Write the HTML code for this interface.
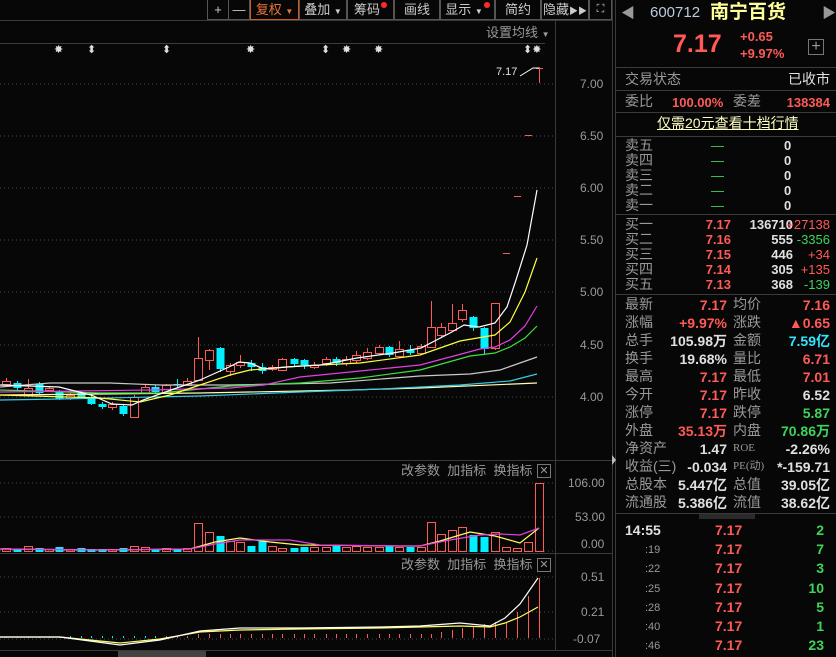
<!DOCTYPE html>
<html><head><meta charset="utf-8"><style>
*{margin:0;padding:0;box-sizing:border-box}
body{width:836px;height:657px;background:#070707;overflow:hidden;position:relative;font-family:"Liberation Sans","Noto Sans CJK SC",sans-serif;color:#ccc}
.a{position:absolute;white-space:nowrap;font-size:13px;line-height:15px}
.r{color:#ff5a55}.g{color:#3fd35a}.w{color:#e0e0e0}.c{color:#33e6ff}.gr{color:#999}
.tb{position:absolute;top:0;height:20px;border:1px solid #555;border-top:none;font-size:13px;line-height:19px;text-align:center;color:#ccc}
.dot{display:inline-block;width:6px;height:6px;border-radius:3px;background:#ff2a2a;vertical-align:6px;margin-left:1px}
.hl{position:absolute;left:615px;width:221px;height:1px;background:#3a3a3a}
.L{position:absolute;left:625px}
.v1{position:absolute;right:109px;text-align:right}
.L2{position:absolute;left:733px}
.v2{position:absolute;right:6px;text-align:right}
</style></head><body>
<svg width="836" height="657" style="position:absolute;left:0;top:0" id="s">
<g stroke="#4a4a4a" stroke-dasharray="1,3">
<line x1="0" y1="84" x2="555" y2="84"/><line x1="0" y1="136" x2="555" y2="136"/><line x1="0" y1="188" x2="555" y2="188"/><line x1="0" y1="240" x2="555" y2="240"/><line x1="0" y1="292" x2="555" y2="292"/><line x1="0" y1="345" x2="555" y2="345"/><line x1="0" y1="397" x2="555" y2="397"/>
<line x1="0" y1="483" x2="555" y2="483"/><line x1="0" y1="517" x2="555" y2="517"/><line x1="0" y1="551" x2="555" y2="551"/>
<line x1="0" y1="577" x2="555" y2="577"/><line x1="0" y1="612" x2="555" y2="612"/><line x1="0" y1="639" x2="555" y2="639"/>
</g>
<g stroke="#3a3a3a" fill="none">
<line x1="0" y1="20.5" x2="612" y2="20.5"/>
<line x1="0" y1="43.5" x2="545" y2="43.5"/>
<line x1="555.5" y1="20" x2="555.5" y2="650"/>
<line x1="0" y1="460.5" x2="612" y2="460.5"/>
<line x1="0" y1="553.5" x2="612" y2="553.5"/>
<line x1="0" y1="650.5" x2="612" y2="650.5"/>
<line x1="612.5" y1="0" x2="612.5" y2="657"/>
<line x1="615.5" y1="0" x2="615.5" y2="657"/>
</g>
<g id="cd"></g>
<g fill="none" stroke-width="1.2">
<polyline stroke="#fffbb0" points="0,395 200,393 350,390 420,388 537,383"/>
<polyline stroke="#33cde8" points="0,400 60,399 200,396 300,392 380,389 460,385 510,381 537,374"/>
<polyline stroke="#c8c8c8" points="0,387 50,383 110,383 160,385 230,385 330,383 420,376 470,374 500,370 537,357"/>
<polyline stroke="#40e040" points="0,390 100,393 160,393 230,386 300,383 360,378 420,370 470,356 495,353 510,347 525,338 537,326"/>
<polyline stroke="#e040e0" points="0,392 150,390 230,388 264,385 300,377 360,371 420,365 480,349 495,347 510,340 525,326 537,306"/>
<polyline stroke="#ffff40" points="0,395 100,398 140,402 170,395 200,385 230,375 250,370 300,366 360,363 420,355 460,341 495,335 510,322 525,292 537,258"/>
<polyline stroke="#ffffff" points="0,385 59,387 91,395 112,404 132,405 143,400 171,390 200,380 229,367 239,362 250,363 264,369 286,367 321,365 357,358 393,353 421,348 450,333 464,325 479,327 495,323 507,307 516,280 527,245 537,190"/>
<polyline stroke="#ffff60" points="0,549 100,550 190,549 215,542 240,538 270,542 300,545 400,546 420,546 440,541 470,532 495,536 520,543 539,528"/>
<polyline stroke="#e040e0" points="0,549 100,550 190,549 215,544 240,540 290,540 320,545 400,546 420,546 450,540 480,535 500,534 520,535 539,528"/>
<polyline stroke="#ffff60" points="0,637 60,637 90,640 120,643 160,639 200,632 240,630 300,629 380,628 420,627 460,626 490,627 505,623 520,617 538,607"/>
<polyline stroke="#ffffff" points="0,637 60,637 90,641 120,645 160,640 200,631 240,628 300,628 380,627 420,626 460,623 490,626 505,618 520,604 538,578"/>
</g>
<g stroke="#fff" fill="none" stroke-width="1"><polyline points="520,76 533,68 540,68"/><line x1="539.5" y1="68" x2="539.5" y2="83" stroke="#ff5a55"/></g>
<polygon points="612,455 616,460 612,465" fill="#bbb"/>
<rect x="118" y="651" width="88" height="6" fill="#444"/>
</svg>
<script>
var s=document.getElementById('cd'),h='';
var C=[[6,381,384,378,386,'r'],[17,383,388,381,390,'c'],[28,388,395,379,396,'r'],[39,384,393,382,394,'c'],[49,388,390,386,392,'r'],[59,392,399,390,400,'c'],[70,395,398,393,400,'r'],[81,393,397,391,399,'c'],[91,397,404,395,405,'c'],[102,404,407,402,409,'c'],[112,404,407,402,410,'r'],[123,406,414,404,416,'c'],[134,397,417,395,417,'r'],[145,387,393,385,394,'r'],[155,387,392,385,394,'c'],[166,385,393,384,394,'r'],[177,384,385,379,388,'c'],[187,381,385,378,386,'r'],[198,358,380,337,381,'r'],[209,350,360,349,370,'r'],[220,348,369,347,372,'c'],[230,365,371,363,376,'r'],[240,362,365,355,368,'r'],[251,363,367,360,371,'c'],[262,367,371,363,374,'c'],[272,367,369,365,371,'r'],[282,359,370,358,371,'r'],[294,359,364,358,366,'c'],[304,360,365,359,369,'c'],[314,365,367,362,369,'r'],[326,359,363,357,366,'r'],[336,359,363,357,366,'c'],[346,359,363,356,366,'r'],[356,355,360,351,363,'r'],[367,352,358,348,360,'r'],[379,347,353,345,355,'r'],[389,347,355,346,357,'c'],[399,349,356,341,358,'r'],[410,350,353,345,355,'c'],[421,346,353,344,355,'r'],[431,327,347,301,348,'r'],[441,327,335,323,338,'r'],[452,323,330,304,332,'r'],[462,310,319,304,322,'r'],[473,317,328,316,331,'c'],[484,328,349,327,354,'c'],[495,303,348,303,350,'r']];
var V=[548,549,546,548,549,547,549,548,549,549,549,548,546,547,549,548,549,548,523,532,536,541,542,546,541,546,548,548,547,547,547,546,547,546,547,547,546,547,547,547,522,534,530,527,535,537,532];
C.forEach(function(c,i){var col=c[5]=='r'?'#ff5a55':'#00f0ff';var x=c[0];
h+='<line x1="'+(x+.5)+'" y1="'+c[3]+'" x2="'+(x+.5)+'" y2="'+c[4]+'" stroke="'+col+'"/>';
if(c[5]=='r')h+='<rect x="'+(x-3.5)+'" y="'+(c[1]+.5)+'" width="8" height="'+Math.max(1,c[2]-c[1])+'" fill="#070707" stroke="'+col+'"/>';
else h+='<rect x="'+(x-3.5)+'" y="'+c[1]+'" width="8" height="'+Math.max(1,c[2]-c[1])+'" fill="'+col+'"/>';
var vy=V[i];if(c[5]=='r')h+='<rect x="'+(x-3.5)+'" y="'+(vy+.5)+'" width="8" height="'+(551-vy)+'" fill="none" stroke="'+col+'"/>';else h+='<rect x="'+(x-3.5)+'" y="'+vy+'" width="8" height="'+(552-vy)+'" fill="'+col+'"/>';
var m=i<18?(i>5&&i<15?'c':'r'):'r';var mh=i<18?2:(i>40?4+(i-40)*2:4);if(i<6)mh=1;
h+='<line x1="'+(x+.5)+'" y1="'+(638-mh)+'" x2="'+(x+.5)+'" y2="638" stroke="'+(m=='c'?'#00f0ff':'#ff5a55')+'"/>';});
[[506,253,547,623],[517,196,548,612],[528,135,542,596],[539,68,483,578]].forEach(function(d){var x=d[0];h+='<line x1="'+(x-3)+'" y1="'+d[1]+'.5" x2="'+(x+4)+'" y2="'+d[1]+'.5" stroke="#ff5a55"/>';h+='<rect x="'+(x-3.5)+'" y="'+(d[2]+.5)+'" width="8" height="'+(551-d[2])+'" fill="none" stroke="#ff5a55"/>';h+='<line x1="'+(x+.5)+'" y1="'+d[3]+'" x2="'+(x+.5)+'" y2="638" stroke="#ff5a55"/>';});
s.innerHTML=h;
</script>
<!-- toolbar -->
<div class="tb" style="left:207px;width:22px">+</div>
<div class="tb" style="left:228px;width:22px">—</div>
<div class="tb" style="left:250px;width:49px;border-color:#d05a20;color:#e8743a">复权 <span style="font-size:8px">▼</span></div>
<div class="tb" style="left:299px;width:48px">叠加 <span style="font-size:8px">▼</span></div>
<div class="tb" style="left:347px;width:47px">筹码<span class="dot"></span></div>
<div class="tb" style="left:394px;width:46px">画线</div>
<div class="tb" style="left:440px;width:55px">显示 <span style="font-size:8px">▼</span><span class="dot"></span></div>
<div class="tb" style="left:495px;width:46px">简约</div>
<div class="tb" style="left:541px;width:48px">隐藏<span style="font-size:9px">▶▶</span></div>
<div class="tb" style="left:589px;width:23px;font-size:11px">⛶</div>
<div class="a gr" style="left:486px;top:25px">设置均线 <span style="font-size:8px">▼</span></div>
<div class="a w" style="left:54px;top:43px;font-size:11px">✸</div>
<div class="a w" style="left:87px;top:43px;font-size:11px">⬍</div>
<div class="a w" style="left:162px;top:43px;font-size:11px">⬍</div>
<div class="a w" style="left:246px;top:43px;font-size:11px">✸</div>
<div class="a w" style="left:321px;top:43px;font-size:11px">⬍</div>
<div class="a w" style="left:342px;top:43px;font-size:11px">✸</div>
<div class="a w" style="left:374px;top:43px;font-size:11px">✸</div>
<div class="a w" style="left:523px;top:43px;font-size:11px">⬍✸</div>
<div class="a w" style="left:496px;top:65px;font-size:11px">7.17</div>
<div class="a gr" style="left:580px;top:77px;font-size:12px">7.00</div>
<div class="a gr" style="left:580px;top:129px;font-size:12px">6.50</div>
<div class="a gr" style="left:580px;top:181px;font-size:12px">6.00</div>
<div class="a gr" style="left:580px;top:233px;font-size:12px">5.50</div>
<div class="a gr" style="left:580px;top:285px;font-size:12px">5.00</div>
<div class="a gr" style="left:580px;top:338px;font-size:12px">4.50</div>
<div class="a gr" style="left:580px;top:390px;font-size:12px">4.00</div>
<div class="a gr" style="left:401px;top:463px">改参数 &nbsp;加指标 &nbsp;换指标</div>
<div class="a gr" style="left:537px;top:464px;width:14px;height:14px;border:1px solid #777;font-size:11px;line-height:12px;text-align:center">✕</div>
<div class="a gr" style="left:568px;top:476px;font-size:12px">106.00</div>
<div class="a gr" style="left:575px;top:510px;font-size:12px">53.00</div>
<div class="a gr" style="left:581px;top:537px;font-size:12px">0.00</div>
<div class="a gr" style="left:401px;top:557px">改参数 &nbsp;加指标 &nbsp;换指标</div>
<div class="a gr" style="left:537px;top:558px;width:14px;height:14px;border:1px solid #777;font-size:11px;line-height:12px;text-align:center">✕</div>
<div class="a gr" style="left:581px;top:570px;font-size:12px">0.51</div>
<div class="a gr" style="left:581px;top:605px;font-size:12px">0.21</div>
<div class="a gr" style="left:573px;top:632px;font-size:12px">-0.07</div>
<!-- right panel -->
<div class="a gr" style="left:621px;top:6px;font-size:14px">◀</div>
<div class="a" style="left:650px;top:5px;font-size:15px;color:#bcd">600712</div>
<div class="a" style="left:710px;top:3px;font-size:19px;line-height:20px;color:#ffff99;font-weight:bold">南宁百货</div>
<div class="a gr" style="left:822px;top:6px;font-size:14px">▶</div>
<div class="a r" style="left:673px;top:30px;font-size:25px;line-height:28px;font-weight:bold">7.17</div>
<div class="a r" style="left:740px;top:29px;font-weight:bold">+0.65</div>
<div class="a r" style="left:740px;top:46px;font-weight:bold">+9.97%</div>
<div class="a gr" style="left:808px;top:39px;width:16px;height:16px;border:1px solid #777;font-size:16px;line-height:13px;text-align:center">+</div>
<div class="hl" style="top:67px"></div>
<div class="L a gr" style="top:72px;font-size:14px">交易状态</div><div class="v2 a w" style="top:72px;font-size:14px">已收市</div>
<div class="hl" style="top:90px"></div>
<div class="L a gr" style="top:94px;font-size:14px">委比</div><div class="a r" style="left:672px;top:95px;font-weight:bold">100.00%</div>
<div class="L2 a gr" style="top:94px;font-size:14px">委差</div><div class="v2 a r" style="top:95px;font-weight:bold">138384</div>
<div class="hl" style="top:112px"></div>
<div class="a" style="left:657px;top:116px;font-size:14px;color:#ffffc0;text-decoration:underline">仅需20元查看十档行情</div>
<div class="hl" style="top:136px"></div>
<div id="ob"></div>
<div class="hl" style="top:214px"></div>
<div class="hl" style="top:294px"></div>
<div id="st"></div>
<div class="hl" style="top:513px"></div>
<div class="a" style="left:699px;top:514px;width:56px;height:5px;background:#2a2a2a"></div>
<div id="tk"></div>
<script>
var o='';
['卖五','卖四','卖三','卖二','卖一'].forEach(function(t,i){var y=138+i*15;o+='<div class="L a gr" style="top:'+y+'px;font-size:14px">'+t+'</div><div class="a g" style="left:711px;top:'+y+'px">—</div><div class="a w" style="left:784px;top:'+y+'px;font-weight:bold">0</div>';});
[['买一','7.17','136710','+27138','r'],['买二','7.16','555','-3356','g'],['买三','7.15','446','+34','r'],['买四','7.14','305','+135','r'],['买五','7.13','368','-139','g']].forEach(function(t,i){var y=217+i*15;o+='<div class="L a gr" style="top:'+y+'px;font-size:14px">'+t[0]+'</div><div class="a r" style="right:105px;top:'+y+'px;font-weight:bold">'+t[1]+'</div><div class="a w" style="right:43px;top:'+y+'px;font-weight:bold">'+t[2]+'</div><div class="v2 a '+t[4]+'" style="top:'+y+'px">'+t[3]+'</div>';});
document.getElementById('ob').innerHTML=o;o='';
[['最新','7.17','r','均价','7.16','r'],['涨幅','+9.97%','r','涨跌','▲0.65','r'],['总手','105.98万','w','金额','7.59亿','c'],['换手','19.68%','w','量比','6.71','r'],['最高','7.17','r','最低','7.01','r'],['今开','7.17','r','昨收','6.52','w'],['涨停','7.17','r','跌停','5.87','g'],['外盘','35.13万','r','内盘','70.86万','g'],['净资产','1.47','w','ROE','-2.26%','w'],['收益(三)','-0.034','w','PE(动)','*-159.71','w'],['总股本','5.447亿','w','总值','39.05亿','w'],['流通股','5.386亿','w','流值','38.62亿','w']].forEach(function(t,i){var y=297+i*18;var f=t[3].length>2&&/[A-Z]/.test(t[3])?'font-size:11px;font-family:Liberation Serif,serif':'font-size:14px';o+='<div class="L a gr" style="top:'+y+'px;font-size:14px">'+t[0]+'</div><div class="a '+t[2]+'" style="right:109px;top:'+(y+1)+'px;font-weight:bold;font-size:14px">'+t[1]+'</div><div class="L2 a gr" style="top:'+y+'px;'+f+'">'+t[3]+'</div><div class="v2 a '+t[5]+'" style="top:'+(y+1)+'px;font-weight:bold;font-size:14px">'+t[4]+'</div>';});
document.getElementById('st').innerHTML=o;o='';
[['14:55','2'],[':19','7'],[':22','3'],[':25','10'],[':28','5'],[':40','1'],[':46','23']].forEach(function(t,i){var y=523+i*19.2;o+='<div class="a '+(i?'gr':'w')+'" style="'+(i?'left:645px;font-size:11px':'left:625px;font-weight:bold;font-size:14px')+';top:'+(y+(i?1:0))+'px">'+t[0]+'</div><div class="a r" style="left:715px;top:'+y+'px;font-weight:bold;font-size:14px">7.17</div><div class="v2 a g" style="top:'+y+'px;font-weight:bold;font-size:14px;right:12px">'+t[1]+'</div>';});
document.getElementById('tk').innerHTML=o;
</script>
</body></html>
